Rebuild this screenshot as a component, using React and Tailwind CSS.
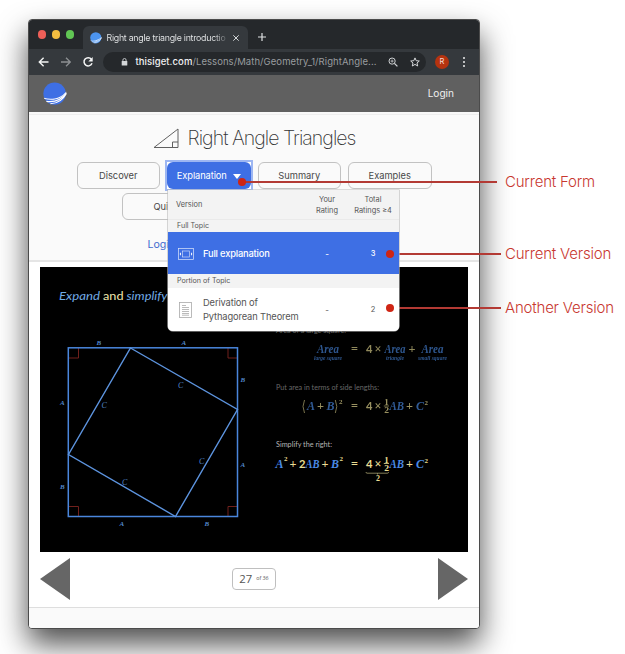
import React from "react";

const BLUE = "#4a8ae4";
const YELLOW = "#e9dd93";

function Logo({ className, color = "#3e6fe4" }) {
  return (
    <svg viewBox="0 0 24 24" className={className}>
      <circle cx="11.6" cy="11.6" r="11.2" fill={color} />
      <path d="M0.8 15.8 C8 18 17 17 23.4 9.4 C19.5 16.6 11 19.2 1.6 16.9Z" fill="#fff" />
      <path d="M3.4 19.4 C11 20.4 18.4 18 23.4 10.6 M7.4 21.8 C14 21.4 20 18 23.4 11.5" fill="none" stroke="#fff" strokeWidth="1.1" />
    </svg>
  );
}

function TabStrip() {
  return (
    <div className="flex h-[29px] shrink-0 items-end bg-[#25282b]">
      <div className="flex h-[29px] w-[54px] items-center gap-[5.5px] pl-[8.5px]">
        <span className="size-[8.5px] rounded-full bg-[#ed5f58]" />
        <span className="size-[8.5px] rounded-full bg-[#f3bd40]" />
        <span className="size-[8.5px] rounded-full bg-[#61c654]" />
      </div>
      <div className="flex h-[23px] w-[165px] items-center rounded-t-[6px] bg-[#35393d] pl-[7px]">
        <Logo className="size-[12px] shrink-0" color="#4c94ee" />
        <span className="ml-[4.5px] w-[121px] bg-gradient-to-r from-[#eceeef] from-88% to-[#4a4e52] bg-clip-text text-[8.8px] tracking-[-0.26px] whitespace-nowrap text-transparent">
          Right angle triangle introductio
        </span>
        <svg viewBox="0 0 6 6" className="ml-[5px] size-[6px] shrink-0">
          <path d="M.3 .3 L5.7 5.7 M5.7 .3 L.3 5.7" stroke="#d5d8da" strokeWidth="1" />
        </svg>
      </div>
      <svg viewBox="0 0 8 8" className="mb-[8px] ml-[10px] size-[8px]">
        <path d="M4 0V8M0 4H8" stroke="#dfe1e3" strokeWidth="1.2" />
      </svg>
    </div>
  );
}

function Toolbar() {
  return (
    <div className="flex h-[26px] shrink-0 items-center bg-[#35393d]">
      <svg viewBox="0 0 62 12" className="ml-[7px] h-[12px] w-[62px] shrink-0" fill="none">
        <path d="M12.5 6H3.5M7.6 1.8L3.3 6L7.6 10.2" stroke="#f4f5f5" strokeWidth="1.4" />
        <path d="M25 6H34M30 1.8L34.3 6L30 10.2" stroke="#8d9093" strokeWidth="1.3" />
        <path d="M55.4 3.3A4.1 4.1 0 1 0 56 7.2" stroke="#f4f5f5" strokeWidth="1.5" />
        <path d="M56.7 1V5.4H52.3Z" fill="#f4f5f5" />
      </svg>
      <div className="ml-[5px] flex h-[20px] w-[323px] shrink-0 items-center rounded-full bg-[#25282b] pl-[18px]">
        <svg viewBox="0 0 8 10" className="h-[8px] w-[7px]">
          <path d="M2 4V2.6a2 2 0 0 1 4 0V4" fill="none" stroke="#d4d7d9" strokeWidth="1.1" />
          <rect x=".5" y="3.8" width="7" height="5.7" rx=".7" fill="#d4d7d9" />
        </svg>
        <span className="ml-[7.5px] w-[242px] text-[9.5px] tracking-[0.07px] whitespace-nowrap text-[#989c9f]">
          <span className="font-medium text-[#f0f1f2]">thisiget.com</span>/Lessons/Math/Geometry_1/RightAngle...
        </span>
        <svg viewBox="0 0 10 10" className="ml-[10px] size-[10px] shrink-0" fill="none" stroke="#cfd2d4">
          <circle cx="4.1" cy="4.1" r="3.1" />
          <path d="M6.4 6.4L9.4 9.4" strokeWidth="1.3" />
          <path d="M2.6 4.1H5.6M4.1 2.6V5.6" strokeWidth=".8" />
        </svg>
        <svg viewBox="0 0 10 10" className="ml-[12px] size-[10px] shrink-0" fill="none" stroke="#d6d8da" strokeWidth="1">
          <path d="M5 .9L6.2 3.7L9.3 4L7 6L7.7 9L5 7.4L2.3 9L3 6L.7 4L3.8 3.7Z" />
        </svg>
      </div>
      <span className="ml-[9px] flex size-[14px] items-center justify-center rounded-full bg-[#b5330f] text-[7.5px] text-[#f3dcd5]">R</span>
      <div className="ml-[14px] flex flex-col gap-[1.8px]">
        <span className="size-[2.2px] rounded-full bg-[#eceded]" />
        <span className="size-[2.2px] rounded-full bg-[#eceded]" />
        <span className="size-[2.2px] rounded-full bg-[#eceded]" />
      </div>
    </div>
  );
}

function FormButton({ children }) {
  return (
    <button className="h-[27px] w-[83.5px] rounded-[6px] border border-[#c2c2c2] bg-[#fafafa] pt-px text-[9.3px] text-[#484848]">
      {children}
    </button>
  );
}

function VersionMenu() {
  return (
    <div className="absolute top-[28px] left-[1px] z-10 flex w-[231px] flex-col overflow-hidden rounded-b-[5px] bg-[#f3f3f3] text-left text-[#555] shadow-[0_0_0_0.6px_#bbb]">
      <div className="flex h-[29px] items-center pl-[8px] text-[7.4px] leading-[11px]">
        <span className="w-[128px]">Version</span>
        <span className="w-[46px] text-center">Your<br />Rating</span>
        <span className="w-[46px] text-center whitespace-nowrap">Total<br />Ratings ≥4</span>
      </div>
      <div className="flex h-[13px] items-center border-t border-[#eaeaea] pl-[9px] text-[7.1px]">Full Topic</div>
      <div className="flex h-[42px] items-center bg-[#3e6fe4] pt-px pl-[10px] text-[9.3px] font-medium text-white">
        <svg viewBox="0 0 16 12" className="h-[12px] w-[16px]" fill="none" stroke="#dfe7fb">
          <rect x=".5" y=".5" width="15" height="11" strokeWidth=".7" />
          <rect x="4.6" y="3" width="6.8" height="6" strokeWidth=".6" />
          <path d="M3 4.3L1.6 6L3 7.7ZM13 4.3L14.4 6L13 7.7Z" fill="#fff" stroke="none" />
        </svg>
        <span className="ml-[9px] w-[101px] tracking-[-0.17px] whitespace-nowrap">Full explanation</span>
        <span className="w-[46px] text-center text-[8px]">-</span>
        <span className="w-[46px] text-center text-[7.5px]">3</span>
      </div>
      <div className="flex h-[14px] items-center pt-px pl-[9px] text-[7.1px]">Portion of Topic</div>
      <div className="flex h-[43px] items-center bg-white pl-[11px] text-[9.3px] leading-[14px] tracking-[-0.12px]">
        <svg viewBox="0 0 13 16" className="h-[16px] w-[13px]" fill="none" stroke="#aaa" strokeWidth=".8">
          <rect x=".5" y=".5" width="12" height="15" />
          <path d="M3 3.5H7M3 5.5H10M3 7.5H10M3 9.5H10M3 11.5H10M3 13.2H10" />
        </svg>
        <span className="ml-[11px] w-[101px] whitespace-nowrap">Derivation of<br />Pythagorean Theorem</span>
        <span className="w-[46px] text-center text-[8px]">-</span>
        <span className="w-[46px] text-center text-[7.5px]">2</span>
      </div>
    </div>
  );
}

function Topic() {
  return (
    <section className="flex h-[149.5px] shrink-0 flex-col items-center border-b-2 border-[#e5e5e5] bg-[#fafafa]">
      <div className="h-[3px] w-full border-b border-[#eeeeee] bg-[#f8f8f8]" />
      <h1 className="mt-[10px] flex h-[26px] items-center text-[19.5px] font-extralight tracking-[-0.97px] text-[#333]">
        <svg viewBox="0 0 26 21" className="mr-[9px] h-[21px] w-[26px]" fill="none" stroke="#606060" strokeWidth="1">
          <path d="M1 19.5L25 1V19.5ZM19.5 19.5V14H25" />
        </svg>
        <span className="w-[168px] pt-px whitespace-nowrap">Right Angle Triangles</span>
      </h1>
      <div className="mt-[11px] flex gap-[7px]">
        <FormButton>Discover</FormButton>
        <div className="relative">
          <div className="bg-white outline-2 outline-[#9db6f2]">
            <button className="flex h-[27px] w-[83.5px] items-center justify-center gap-[6px] rounded-[6px] bg-[#3e6fe4] pt-px text-[9.3px] tracking-[-0.1px] text-white">
              Explanation
              <svg viewBox="0 0 8 5" className="h-[5px] w-[8px]"><path d="M0 0H8L4 5Z" fill="#fff" /></svg>
            </button>
          </div>
          <VersionMenu />
        </div>
        <FormButton>Summary</FormButton>
        <FormButton>Examples</FormButton>
      </div>
      <div className="mt-[4px] flex gap-[7px]">
        <FormButton>Quiz</FormButton>
        <span className="w-[174px]" />
      </div>
      <a className="mt-[17px] w-[213px] text-[10.6px] leading-[15px] whitespace-nowrap text-[#446bcf]">Login to rate</a>
    </section>
  );
}

function T({ x, y, w, size = 12, fill = YELLOW, sans, plain, weight, children }) {
  return (
    <text
      x={x} y={y} fontSize={size} fill={fill}
      textLength={w} lengthAdjust="spacingAndGlyphs"
      fontWeight={weight || (sans ? "normal" : "bold")}
      fontFamily={sans ? "Lato, sans-serif" : "'Liberation Serif', serif"}
      fontStyle={sans || plain ? "normal" : "italic"}
    >
      {children}
    </text>
  );
}

const sideLabels = [
  ["B", 96.5, 344.5], ["A", 181.5, 344.5], ["B", 240.5, 382], ["A", 240.5, 467],
  ["A", 60, 405], ["B", 60, 489], ["A", 119.5, 526], ["B", 204.5, 526],
];
const hypLabels = [[178, 387.5], [101.5, 408], [199, 464], [122, 485]];

/* Right-hand side shared by the last two equations */
function RightSide({ y }) {
  return (
    <g>
      <T x={366} y={y} w={6.5} size={12} sans weight="bold">4</T>
      <T x={374.5} y={y} w={7} size={12} plain>×</T>
      <T x={384.2} y={y - 5} w={4.5} size={9} plain>1</T>
      <path d={`M383.8 ${y - 4}H389`} stroke={YELLOW} strokeWidth=".8" />
      <T x={384.2} y={y + 3.4} w={4.8} size={9} plain>2</T>
      <T x={389.5} y={y} w={14.5} size={12} fill={BLUE}>AB</T>
      <T x={406} y={y} w={7} size={12} plain>+</T>
      <T x={416} y={y} w={8} size={12} fill={BLUE}>C</T>
      <T x={424.5} y={y - 5} w={3.5} size={6.5} plain>2</T>
    </g>
  );
}

function Slide() {
  return (
    <svg viewBox="40 267 428 285" className="mx-auto block h-[285px] w-[428px] shrink-0 bg-black">
      <g fontFamily="Lato, sans-serif" fontSize="12.3">
        <text x="59" y="300" fill="#72abe4" fontStyle="italic" textLength="41" lengthAdjust="spacingAndGlyphs">Expand</text>
        <text x="103" y="300" fill="#efe6ae" textLength="20.5" lengthAdjust="spacingAndGlyphs">and</text>
        <text x="126.5" y="300" fill="#72abe4" fontStyle="italic" textLength="41" lengthAdjust="spacingAndGlyphs">simplify</text>
      </g>
      <path d="M69 358H78.5V348M228 348V358H237M69 506.5H78.5V516M228 516V506.5H237" fill="none" stroke="#70201c" strokeWidth="1" />
      <rect x="68.3" y="347.8" width="169.2" height="168.7" fill="none" stroke="#4a86dc" strokeWidth="1.5" />
      <path d="M130.5 348L237.5 409.5L175.5 516.5L68.5 454.5Z" fill="none" stroke="#5d94df" strokeWidth="1.4" />
      <g fontFamily="'Liberation Serif', serif" fontStyle="italic" fill="#5286c8">
        {sideLabels.map(([s, x, y], i) => <text key={i} x={x} y={y} fontSize="7" fontWeight="bold">{s}</text>)}
        {hypLabels.map(([x, y], i) => <text key={i} x={x} y={y} fontSize="8">C</text>)}
      </g>

      <T x={276} y={333.3} w={70} size={7} fill="#686868" sans>Area of a large square:</T>
      <g opacity=".62">
        <T x={317} y={352.5} w={22} size={12} fill={BLUE}>Area</T>
        <T x={314} y={359.5} w={28} size={6} fill={BLUE}>large square</T>
        <T x={351} y={352.5} w={7} plain>=</T>
        <T x={366} y={352.5} w={6.5} size={12} sans weight="bold">4</T>
        <T x={374.5} y={352.5} w={7} size={12} plain>×</T>
        <T x={384.5} y={352.5} w={21} size={12} fill={BLUE}>Area</T>
        <T x={386} y={359.5} w={18} size={6} fill={BLUE}>triangle</T>
        <T x={408.5} y={352.5} w={7} plain>+</T>
        <T x={421.5} y={352.5} w={22} size={12} fill={BLUE}>Area</T>
        <T x={418} y={359.5} w={29} size={6} fill={BLUE}>small square</T>
      </g>

      <T x={276} y={390} w={103} size={7} fill="#686868" sans>Put area in terms of side lengths:</T>
      <g opacity=".66">
        <path d="M304.5 400Q301.5 406.5 304.5 413M335.3 400Q338.3 406.5 335.3 413" fill="none" stroke={YELLOW} strokeWidth=".8" />
        <T x={307} y={410} w={8} size={12} fill={BLUE}>A</T>
        <T x={317} y={410} w={7} plain>+</T>
        <T x={326.5} y={410} w={8} size={12} fill={BLUE}>B</T>
        <T x={339} y={403.5} w={3.5} size={6.5} plain>2</T>
        <T x={351} y={410} w={7} plain>=</T>
        <RightSide y={410} />
      </g>

      <T x={276} y={447} w={56} size={7} fill="#b5b5b5" sans>Simplify the right:</T>
      <T x={275.5} y={467.5} w={8} size={12} fill={BLUE}>A</T>
      <T x={284} y={461} w={3.5} size={6.5} plain>2</T>
      <T x={289.5} y={467.5} w={7} plain>+</T>
      <T x={299} y={467.5} w={6.5} size={12} sans weight="bold">2</T>
      <T x={305.5} y={467.5} w={14} size={12} fill={BLUE}>AB</T>
      <T x={321.5} y={467.5} w={7} plain>+</T>
      <T x={331} y={467.5} w={8} size={12} fill={BLUE}>B</T>
      <T x={339.5} y={461} w={3.5} size={6.5} plain>2</T>
      <T x={351} y={467.5} w={7} plain>=</T>
      <RightSide y={467.5} />
      <path d="M366 472Q366 473.2 367 473.2H387.5Q388.5 473.2 388.5 472M377.5 473.2V474.5" fill="none" stroke="#a59d6d" strokeWidth=".8" />
      <T x={376} y={481} w={4} size={7.5} plain>2</T>
    </svg>
  );
}

function Pager() {
  return (
    <div className="mx-auto mt-[6px] flex h-[42px] w-[428px] shrink-0 items-center justify-between">
      <svg viewBox="0 0 30 42" className="h-[42px] w-[30px]"><path d="M0 21L30 0V42Z" fill="#666" /></svg>
      <div className="flex h-[22px] w-[44px] items-center justify-center gap-[4px] rounded-[4px] border border-[#bfbfbf] font-['Open_Sans',sans-serif] text-[#555]">
        <span className="text-[11.3px]">27</span>
        <span className="text-[5.3px]">of 36</span>
      </div>
      <svg viewBox="0 0 30 42" className="h-[42px] w-[30px]"><path d="M30 21L0 0V42Z" fill="#666" /></svg>
    </div>
  );
}

const callouts = [
  { label: "Current Form", row: "absolute top-[171px] left-[238px] flex items-center", line: "w-[255px]", text: "ml-[8px] w-[92px]" },
  { label: "Current Version", row: "absolute top-[243px] left-[386px] flex items-center", line: "w-[111px]", text: "ml-[4px] w-[107px]" },
  { label: "Another Version", row: "absolute top-[297px] left-[386px] flex items-center", line: "w-[111px]", text: "ml-[4px] w-[110px]" },
];

export default function App() {
  return (
    <div className="relative h-[654px] w-[625px] overflow-hidden bg-white pt-[19px] pl-[28px] font-['Inter',sans-serif]">
      <div className="flex h-[610px] w-[452px] flex-col overflow-hidden rounded-[4px] border border-[#4b4b4b] bg-white shadow-[0_15px_30px_rgba(0,0,0,0.7)]">
        <TabStrip />
        <Toolbar />
        <header className="flex h-[37px] shrink-0 items-center justify-between bg-[#606060] pr-[25px] pl-[14px]">
          <Logo className="size-[24px]" />
          <span className="text-[10.1px] text-[#efefef]">Login</span>
        </header>
        <Topic />
        <div className="h-[5.5px] shrink-0" />
        <Slide />
        <Pager />
        <footer className="mt-[7px] grow border-t border-[#dedede] bg-[#fafafa]" />
      </div>
      {callouts.map((c) => (
        <div key={c.label} className={c.row}>
          <span className="z-10 size-[8px] rounded-full bg-[#cf2514]" />
          <span className={`-ml-[4px] h-[2px] bg-[#b33a34] ${c.line}`} />
          <span className={`${c.text} text-[15px] leading-[22px] font-light tracking-[-0.2px] whitespace-nowrap text-[#c8372f]`}>{c.label}</span>
        </div>
      ))}
    </div>
  );
}
